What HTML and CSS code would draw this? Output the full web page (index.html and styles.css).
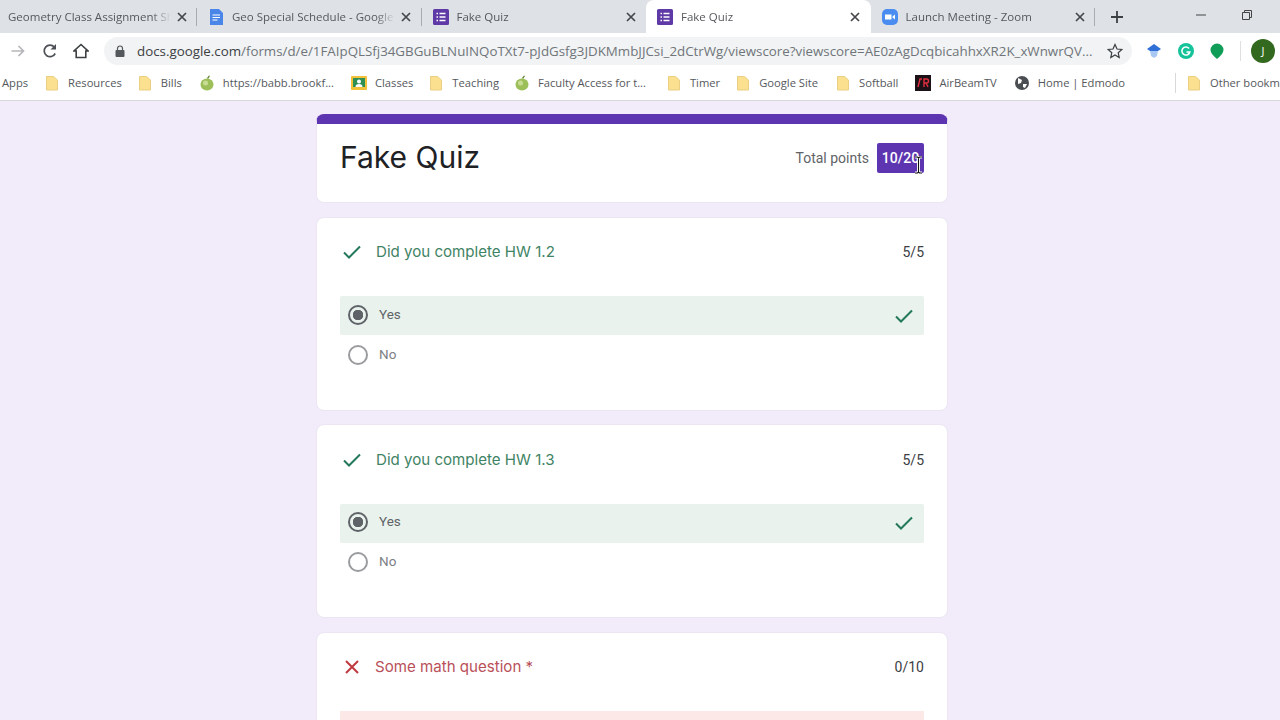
FILE: index.html
```html
<!DOCTYPE html>
<html lang="en">
<head>
    <meta charset="UTF-8">
    <meta name="viewport" content="width=device-width, initial-scale=1.0">
    <title>Fake Quiz</title>
    <link rel="stylesheet" href="styles.css">
</head>
<body>
    <svg class="defs" width="0" height="0">
        <symbol id="folder" viewBox="0 0 12 16"><path d="M.5 1.500h7l4 3.500v10H.5z" fill="#fbe08f" stroke="#e9cf83"/></symbol>
        <symbol id="apple" viewBox="0 0 16 16"><path d="M8 3l2-2.500 1 .5-2 3z" fill="#5d7f2c"/><ellipse cx="8" cy="9.500" rx="6.500" ry="6" fill="#9cbf5a"/><ellipse cx="6.500" cy="8" rx="2.500" ry="2.500" fill="#c9dc94"/></symbol>
        <symbol id="forms" viewBox="0 0 16 16"><rect width="16" height="16" rx="1.500" fill="#5f3aa6"/><path d="M3.500 4.500h1.500M6.500 4.500h6M3.500 8h1.500M6.500 8h6M3.500 11.500h1.500M6.500 11.500h6" stroke="#fff" stroke-width="1.400"/></symbol>
        <symbol id="x" viewBox="0 0 10 10"><path d="M1 1l8 8M9 1l-8 8" stroke="#45474a" stroke-width="1.700"/></symbol>
        <symbol id="tick" viewBox="0 0 18 14"><path d="M1 7.500l5 5L17 1.500" fill="none" stroke="#23795a" stroke-width="2"/></symbol>
    </svg>

    <div class="tabstrip">
        <div class="tab first sep">
            <span class="tab-title">Geometry Class Assignment Sheet</span>
            <svg class="tab-x"><use href="#x"/></svg>
        </div>
        <div class="tab sep">
            <svg class="tab-icon" viewBox="0 0 16 16"><path d="M2 0h9l4 4v12H2z" fill="#4a86e8"/><path d="M4.500 6h7.500M4.500 8.500h7.500M4.500 11h5" stroke="#fff" stroke-width="1.200"/></svg>
            <span class="tab-title">Geo Special Schedule - Google Docs</span>
            <svg class="tab-x"><use href="#x"/></svg>
        </div>
        <div class="tab">
            <svg class="tab-icon"><use href="#forms"/></svg>
            <span class="tab-title">Fake Quiz</span>
            <svg class="tab-x"><use href="#x"/></svg>
        </div>
        <div class="tab active">
            <svg class="tab-icon"><use href="#forms"/></svg>
            <span class="tab-title">Fake Quiz</span>
            <svg class="tab-x"><use href="#x"/></svg>
        </div>
        <div class="tab sep">
            <svg class="tab-icon" viewBox="0 0 16 16"><rect width="16" height="16" rx="5" fill="#4a8cf0"/><path d="M3 5.500h6.500v5H3zM10.500 7.500l2.500-2v5l-2.500-2z" fill="#fff"/></svg>
            <span class="tab-title">Launch Meeting - Zoom</span>
            <svg class="tab-x"><use href="#x"/></svg>
        </div>
        <svg class="new-tab" viewBox="0 0 12 12"><path d="M6 0v12M0 6h12" stroke="#3c4043" stroke-width="1.800"/></svg>
        <div class="win-controls">
            <svg class="win-min" viewBox="0 0 10 2"><path d="M0 1h10" stroke="#444" stroke-width="1"/></svg>
            <svg class="win-max" viewBox="0 0 10 10"><path d="M.5 2.500h7v7h-7zM2.500 2.500v-2h7v7h-2" fill="none" stroke="#444"/></svg>
        </div>
    </div>

    <div class="toolbar">
        <svg class="tool-btn forward" viewBox="0 0 16 16"><path d="M1.500 8h12M8.500 3l5 5-5 5" fill="none" stroke="#b4b6b9" stroke-width="1.700"/></svg>
        <svg class="tool-btn reload" viewBox="0 0 16 16"><path d="M13.200 10.500A5.800 5.800 0 1 1 12.300 4" fill="none" stroke="#4d5054" stroke-width="1.700"/><path d="M14 1v5.500H8.500z" fill="#4d5054"/></svg>
        <svg class="tool-btn home" viewBox="0 0 16 16"><path d="M8 1.500L1 8h2.200v6.500h9.600V8H15z" fill="none" stroke="#3c4043" stroke-width="1.600"/></svg>
        <div class="urlbar">
            <svg class="lock" viewBox="0 0 10 12"><path d="M2.500 5V3.500a2.500 2.500 0 0 1 5 0V5" fill="none" stroke="#55585c" stroke-width="1.200"/><rect y="5" width="9" height="7" rx="1" x="0.500" fill="#55585c"/></svg>
            <span class="url"><span class="url-host">docs.google.com</span>/forms/d/e/1FAIpQLSfj34GBGuBLNuINQoTXt7-pJdGsfg3JDKMmbJJCsi_2dCtrWg/viewscore?viewscore=AE0zAgDcqbicahhxXR2K_xWnwrQV...</span>
            <svg class="star" viewBox="0 0 16 16"><path d="M8 1.500l2 4.500 4.800.5-3.600 3.200 1 4.800L8 12l-4.200 2.500 1-4.800L1.200 6.500 6 6z" fill="none" stroke="#3c4043" stroke-width="1.200"/></svg>
        </div>
        <div class="extensions">
            <svg class="ext" viewBox="0 0 16 16"><path d="M8 1l7 5-3 2H4L1 6z" fill="#2f6fd6"/><path d="M4 8h8l-1 5-3 2-3-2z" fill="#a9c8f3"/></svg>
            <svg class="ext" viewBox="0 0 16 16"><circle cx="8" cy="8" r="8" fill="#15c39a"/><path d="M11 5.500A4 4 0 1 0 11.800 9H8.500" fill="none" stroke="#fff" stroke-width="1.600"/></svg>
            <svg class="ext" viewBox="0 0 16 16"><path d="M8 16C4.500 13 1.500 10 1.500 7a6.500 6.500 0 0 1 13 0c0 3-3 6-6.500 9z" fill="#0f9d58"/></svg>
            <span class="tool-sep"></span>
            <span class="avatar">J</span>
        </div>
    </div>

    <div class="bookmarks">
        <span class="bm apps">Apps</span>
        <span class="bm"><svg class="bm-icon folder"><use href="#folder"/></svg>Resources</span>
        <span class="bm"><svg class="bm-icon folder"><use href="#folder"/></svg>Bills</span>
        <span class="bm"><svg class="bm-icon"><use href="#apple"/></svg>https://babb.brookf...</span>
        <span class="bm"><svg class="bm-icon" viewBox="0 0 16 16"><rect y="1" width="16" height="14" rx="1" fill="#f3c13a"/><rect x="2" y="3" width="12" height="9" fill="#2f8f55"/><circle cx="8" cy="6.500" r="2" fill="#fff"/><path d="M4.500 12a3.500 3 0 0 1 7 0z" fill="#fff"/></svg>Classes</span>
        <span class="bm teaching"><svg class="bm-icon folder"><use href="#folder"/></svg>Teaching</span>
        <span class="bm faculty"><svg class="bm-icon"><use href="#apple"/></svg>Faculty Access for t...</span>
        <span class="bm"><svg class="bm-icon folder"><use href="#folder"/></svg>Timer</span>
        <span class="bm site"><svg class="bm-icon folder"><use href="#folder"/></svg>Google Site</span>
        <span class="bm"><svg class="bm-icon folder"><use href="#folder"/></svg>Softball</span>
        <span class="bm"><svg class="bm-icon" viewBox="0 0 16 16"><rect width="16" height="16" fill="#1c1116"/><path d="M3 12l2-8h2M9 12V4h2.500a2 2 0 0 1 0 4H9M11 8l2 4" fill="none" stroke="#e0303f" stroke-width="1.400"/></svg>AirBeamTV</span>
        <span class="bm"><svg class="bm-icon" viewBox="0 0 16 16"><circle cx="8" cy="8" r="7" fill="#4a4d51"/><path d="M4 3l4 2-1 3-3 1zM9 9l4 0-2 4-2-1z" fill="#fff"/></svg>Home | Edmodo</span>
        <span class="bm-spacer"></span>
        <span class="bm other"><svg class="bm-icon folder"><use href="#folder"/></svg>Other bookmarks</span>
    </div>

    <main class="form-page">
        <section class="card head-card">
            <div class="head-row">
                <h1 class="form-title">Fake Quiz</h1>
                <div class="total">
                    <span>Total points</span>
                    <span class="badge">10/20</span>
                    <svg class="cursor" viewBox="0 0 9 18"><path d="M1 1h2.500l1 1 1-1H8M4.500 2v14M1 17h2.500l1-1 1 1H8" fill="none" stroke="#fff" stroke-width="3"/><path d="M1 1h2.500l1 1 1-1H8M4.500 2v14M1 17h2.500l1-1 1 1H8" fill="none" stroke="#111" stroke-width="1.100"/></svg>
                </div>
            </div>
        </section>

        <section class="card question">
            <div class="q-row correct">
                <svg class="q-mark"><use href="#tick"/></svg>
                <span class="q-text">Did you complete HW 1.2</span>
                <span class="q-points">5/5</span>
            </div>
            <div class="option right">
                <span class="radio on"></span>
                <span class="opt-text">Yes</span>
                <svg class="opt-tick"><use href="#tick"/></svg>
            </div>
            <div class="option">
                <span class="radio"></span>
                <span class="opt-text">No</span>
            </div>
        </section>

        <section class="card question">
            <div class="q-row correct">
                <svg class="q-mark"><use href="#tick"/></svg>
                <span class="q-text">Did you complete HW 1.3</span>
                <span class="q-points">5/5</span>
            </div>
            <div class="option right">
                <span class="radio on"></span>
                <span class="opt-text">Yes</span>
                <svg class="opt-tick"><use href="#tick"/></svg>
            </div>
            <div class="option">
                <span class="radio"></span>
                <span class="opt-text">No</span>
            </div>
        </section>

        <section class="card question">
            <div class="q-row wrong">
                <svg class="q-mark cross" viewBox="0 0 14 14"><path d="M1 1l12 12M13 1L1 13" stroke="#c0393f" stroke-width="2"/></svg>
                <span class="q-text">Some math question *</span>
                <span class="q-points">0/10</span>
            </div>
            <div class="option bad"></div>
        </section>
    </main>
</body>
</html>
```

FILE: styles.css
```css
* {
    box-sizing: border-box;
}

body {
    margin: 0;
    height: 720px;
    overflow: hidden;
    background-color: #f2ebfa;
    font-family: "Open Sans", Arial, sans-serif;
    color: #3c4043;
}

.defs {
    position: absolute;
}

/* tabs */
.tabstrip {
    display: flex;
    align-items: center;
    height: 33px;
    background-color: #dee1e6;
}

.tab {
    display: flex;
    align-items: center;
    width: 224.5px;
    height: 33px;
    padding: 0 10.5px 0 11px;
    font-size: 11.5px;
    color: #55585c;
}

.tab.first {
    width: 197px;
    padding: 0 10px 0 8px;
}

.tab.sep {
    background: linear-gradient(#a9abaf, #a9abaf) right center / 1px 18px no-repeat;
}

.tab.active {
    background-color: #fff;
    border-radius: 8px 8px 0 0;
}

.tab-icon {
    flex-shrink: 0;
    width: 16px;
    height: 16px;
    margin-right: 8px;
}

.tab-title {
    flex-grow: 1;
    overflow: hidden;
    white-space: nowrap;
    -webkit-mask-image: linear-gradient(to right, #000 88%, transparent 100%);
    mask-image: linear-gradient(to right, #000 88%, transparent 100%);
}

.tab-x {
    flex-shrink: 0;
    width: 10px;
    height: 10px;
    margin-left: 6px;
}

.new-tab {
    width: 12px;
    height: 12px;
    margin-left: 16px;
}

.win-controls {
    display: flex;
    align-items: center;
    margin-left: auto;
    padding-right: 28px;
    gap: 36px;
    height: 33px;
    padding-bottom: 4px;
}

.win-min {
    width: 10px;
    height: 2px;
}

.win-max {
    width: 10px;
    height: 10px;
}

/* toolbar */
.toolbar {
    display: flex;
    align-items: center;
    height: 36px;
    background-color: #fff;
    padding-left: 10px;
}

.tool-btn {
    flex-shrink: 0;
    width: 16px;
    height: 16px;
}

.reload {
    margin-left: 16px;
}

.home {
    margin-left: 15px;
}

.urlbar {
    display: flex;
    align-items: center;
    width: 1028px;
    height: 28px;
    margin-left: 15px;
    padding: 0 9px 0 11px;
    border-radius: 14px;
    background-color: #f1f3f4;
    font-size: 13.33px;
    color: #70757a;
}

.lock {
    flex-shrink: 0;
    width: 10px;
    height: 12px;
    margin-right: 12px;
}

.url {
    flex-grow: 1;
    white-space: nowrap;
    overflow: hidden;
}

.url-host {
    color: #3c4043;
}

.star {
    flex-shrink: 0;
    width: 16px;
    height: 16px;
    margin-left: 14px;
}

.extensions {
    display: flex;
    align-items: center;
    margin-left: 14px;
    gap: 15.5px;
}

.ext {
    width: 16px;
    height: 16px;
}

.tool-sep {
    width: 1px;
    height: 20px;
    margin: 0 -1px;
    background-color: #e0e0e0;
}

.avatar {
    width: 24px;
    height: 24px;
    margin-left: -4px;
    border-radius: 50%;
    background-color: #33691e;
    color: #fff;
    font-size: 11px;
    line-height: 24px;
    text-align: center;
}

/* bookmarks */
.bookmarks {
    display: flex;
    align-items: center;
    height: 32px;
    padding: 0 0 4px 2px;
    gap: 17px;
    background-color: #fff;
    border-bottom: 1px solid #d9d9dc;
    font-size: 11.2px;
    color: #55585c;
    white-space: nowrap;
}

.bm {
    display: flex;
    flex-shrink: 0;
    align-items: center;
    gap: 8px;
}

.bm-icon {
    flex-shrink: 0;
    width: 16px;
    height: 16px;
}

.bm-icon.folder {
    width: 12px;
    margin-right: 2px;
}

.apps {
    margin-right: 1px;
}

.teaching {
    margin-right: -2px;
}

.faculty {
    margin-right: 5px;
}

.site {
    margin-right: 2px;
}

.bm-spacer {
    flex-grow: 1;
    height: 20px;
    border-right: 1px solid #d9d9dc;
}

.other {
    width: 92px;
    margin-left: -5px;
    overflow: hidden;
}

/* form */
.form-page {
    display: flex;
    flex-direction: column;
    gap: 13.75px;
    width: 632px;
    margin: 13px 0 0 316px;
}

.card {
    flex-shrink: 0;
    background-color: #fff;
    border: 1px solid #ece6f3;
    border-radius: 8px;
    padding: 0 23px;
}

.head-card {
    height: 89px;
    border-top: 10px solid #5e35b1;
}

.head-row {
    display: flex;
    align-items: center;
    justify-content: space-between;
    padding-top: 15px;
}

.form-title {
    margin: 0 0 1px;
    font-family: Inter, Arial, sans-serif;
    font-size: 30px;
    font-weight: 400;
    color: #202124;
}

.total {
    position: relative;
    display: flex;
    align-items: center;
    gap: 8px;
    font-family: Roboto, Arial, sans-serif;
    font-size: 14px;
    color: #5f6368;
}

.badge {
    width: 47px;
    height: 30px;
    border-radius: 2px;
    background-color: #5e35b1;
    color: #fff;
    font-weight: 500;
    line-height: 30px;
    text-align: center;
}

.cursor {
    position: absolute;
    right: 1px;
    top: 13px;
    width: 9px;
    height: 18px;
}

.question {
    height: 193.75px;
    padding-top: 22.25px;
}

.q-row {
    display: flex;
    align-items: center;
    height: 24px;
    margin-bottom: 32px;
    font-family: Inter, Arial, sans-serif;
}

.q-mark {
    width: 18px;
    height: 14px;
    margin: 0 15px 0 3px;
}

.q-mark.cross {
    width: 14px;
    margin: 0 16px 0 5px;
}

.q-text {
    flex-grow: 1;
    margin-bottom: 1px;
    font-size: 15.1px;
}

.correct .q-text {
    color: #3f8365;
}

.wrong .q-text {
    color: #b9505a;
}

.q-points {
    font-family: Roboto, Arial, sans-serif;
    font-size: 14px;
    color: #3c4043;
}

.option {
    display: flex;
    align-items: center;
    height: 39px;
    padding: 0 11px 0 8px;
    font-family: Roboto, Arial, sans-serif;
    font-size: 13.5px;
    color: #7d8085;
}

.option.right {
    padding-bottom: 2px;
    background-color: #e9f2ed;
    border-radius: 2px;
    color: #5f6368;
}

.option.bad {
    background-color: #fce8e6;
}

.radio {
    flex-shrink: 0;
    width: 20px;
    height: 20px;
    margin-right: 11px;
    border: 2px solid #9a9c9f;
    border-radius: 50%;
}

.radio.on {
    border-color: #5f6368;
    background: radial-gradient(circle, #5f6368 0 5px, transparent 5.500px);
}

.opt-text {
    flex-grow: 1;
    margin-bottom: 2px;
}

.opt-tick {
    width: 18px;
    height: 14px;
    margin-top: 2px;
}
```
